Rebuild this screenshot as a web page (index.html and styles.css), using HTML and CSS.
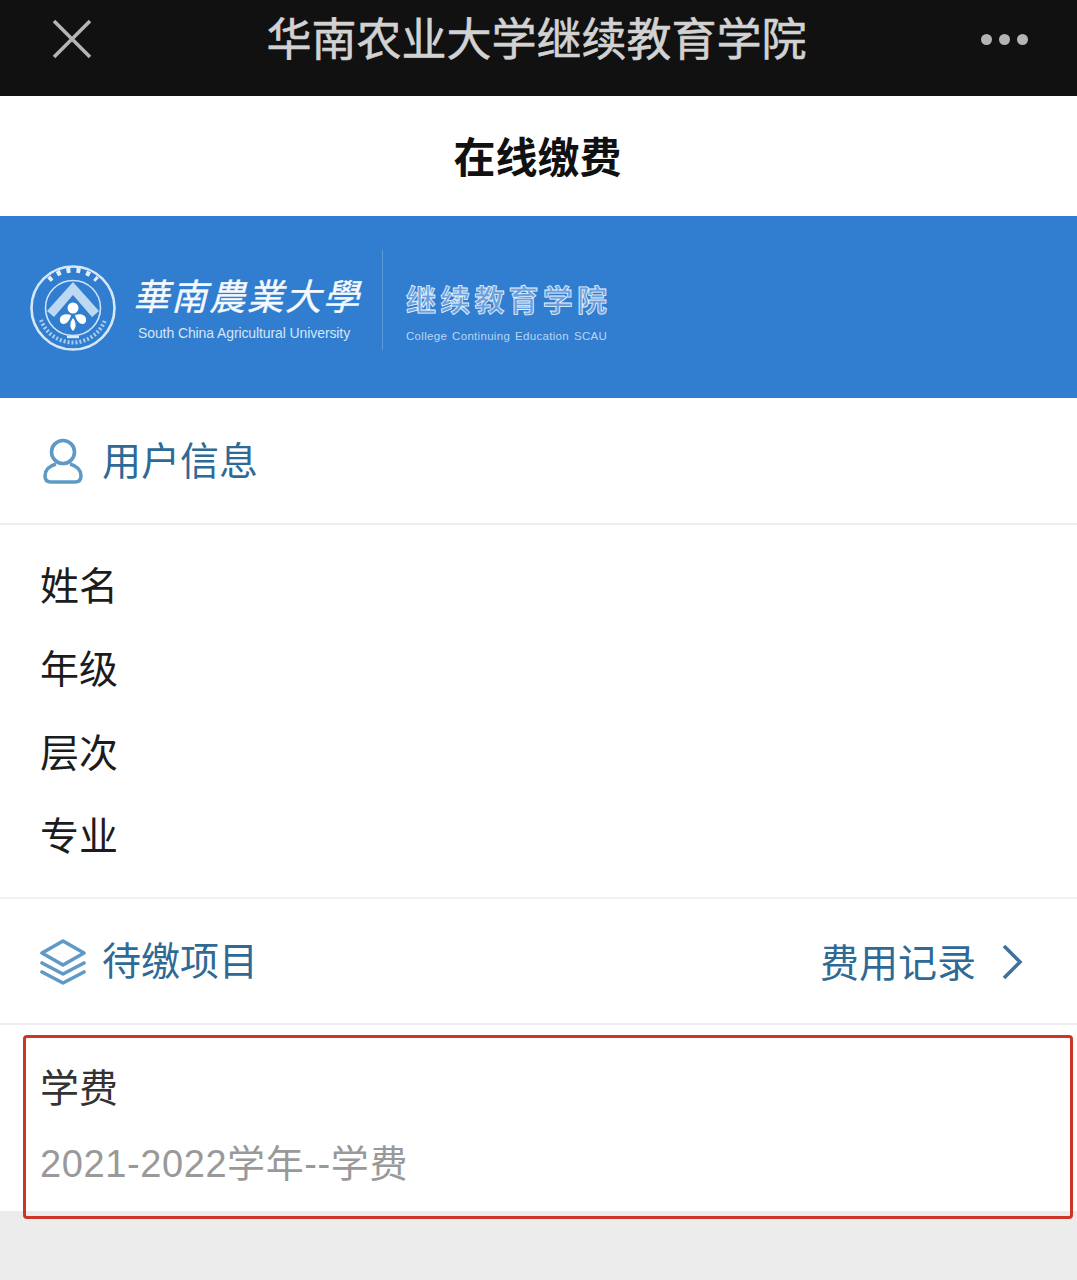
FILE: index.html
```html
<!DOCTYPE html>
<html lang="zh-CN">
<head>
<meta charset="utf-8">
<title>在线缴费</title>
<link rel="stylesheet" href="styles.css">
</head>
<body>
<div class="page">
  <header class="topbar">
    <svg class="close" viewBox="0 0 40 40" width="40" height="40"><path d="M2 2 38 38M38 2 2 38" fill="none" stroke="#b4b4b4" stroke-width="3.6"/></svg>
    <h1 class="toptitle">华南农业大学继续教育学院</h1>
    <div class="dots"><i></i><i></i><i></i></div>
  </header>
  <div class="pagetitle">在线缴费</div>
  <div class="banner">
    <svg class="seal" viewBox="0 0 88 88" width="88" height="88">
      <circle cx="44" cy="44" r="41.5" fill="none" stroke="#d6e8f8" stroke-width="2.6"/>
      <circle cx="44" cy="44" r="27.5" fill="none" stroke="#cfe3f6" stroke-width="1.6"/>
      <path d="M20 16a34 34 0 0 1 48 0" fill="none" stroke="#e4f0fa" stroke-width="5" stroke-dasharray="4 6"/>
      <path d="M12 56a34 34 0 0 0 64 0" fill="none" stroke="#a9cdef" stroke-width="4" stroke-dasharray="2 2"/>
      <path d="M44 18 18 47l7 6 19-22 19 22 7-6z" fill="#bcd8f2"/>
      <circle cx="44" cy="44" r="5.5" fill="#fff"/>
      <path d="M42 51c-7-2-12 1-11 6 1 5 9 4 11-6zM46 51c7-2 12 1 11 6-1 5-9 4-11-6zM44 54c-3 4-4 9 0 13 4-4 3-9 0-13z" fill="#fff"/>
      <path d="M38 73h12" stroke="#dcebf9" stroke-width="2.4"/>
    </svg>
    <div class="brand">
      <div class="brand-cn">華南農業大學</div>
      <div class="brand-en">South China Agricultural University</div>
    </div>
    <div class="brand-rule"></div>
    <div class="college">
      <div class="college-cn">继续教育学院</div>
      <div class="college-en">College Continuing Education SCAU</div>
    </div>
  </div>
  <section class="section-head">
    <div class="head-left">
      <svg class="head-icon" viewBox="0 0 46 46" width="46" height="46"><g fill="none" stroke="#5f9ac6" stroke-width="3.6"><circle cx="23" cy="14" r="11.5"/><path d="M16 26C9 28 5 32 5 38c0 4 2 6 6 6h24c4 0 6-2 6-6 0-6-4-10-11-12"/></g></svg>
      <span class="head-text head-text-up">用户信息</span>
    </div>
  </section>
  <section class="info">
    <div class="info-row">姓名</div>
    <div class="info-row">年级</div>
    <div class="info-row">层次</div>
    <div class="info-row">专业</div>
  </section>
  <section class="section-head section-head-2">
    <div class="head-left">
      <svg class="head-icon layers" viewBox="0 0 46 46" width="46" height="46"><g fill="none" stroke="#5f9ac6" stroke-width="3.6" stroke-linejoin="round" stroke-linecap="round"><path d="M23 2 44 14 23 26 2 14z"/><path d="M2 24 23 35 44 24"/><path d="M2 33 23 44 44 33"/></g></svg>
      <span class="head-text head-text-up">待缴项目</span>
    </div>
    <div class="head-right">
      <span class="head-text">费用记录</span>
      <svg class="chev" viewBox="0 0 22 36" width="22" height="36"><path d="M3 2 19 18 3 34" fill="none" stroke="#3f729c" stroke-width="3.6"/></svg>
    </div>
  </section>
  <section class="fee">
    <div class="fee-name">学费</div>
    <div class="fee-desc">2021-2022学年--学费</div>
    <div class="highlight"></div>
  </section>
</div>
</body>
</html>
```
FILE: styles.css
```css
* { box-sizing: border-box; }
html, body { margin: 0; padding: 0; }
body {
  width: 1077px;
  height: 1280px;
  overflow: hidden;
  background: #ececec;
  font-family: "Noto Sans CJK SC", "Liberation Sans", sans-serif;
}
.page { display: flex; flex-direction: column; width: 1077px; }
.topbar {
  height: 96px;
  background: #111112;
  display: flex;
  align-items: center;
  justify-content: space-between;
  padding: 0 49px 18px 52px;
}
.close { display: block; }
.toptitle {
  margin: 0 0 5px;
  flex: 1;
  text-align: center;
  font-size: 45px;
  line-height: 60px;
  font-weight: 400;
  color: #d2d2d2;
  -webkit-text-stroke: 0.6px #d2d2d2;
}
.dots { display: flex; gap: 7px; }
.dots i { display: block; width: 11px; height: 11px; border-radius: 50%; background: #b4b4b4; }
.pagetitle {
  height: 120px;
  background: #fff;
  display: flex;
  align-items: center;
  justify-content: center;
  padding: 0 2px 4px 0;
  font-size: 42px;
  font-weight: 700;
  color: #111;
}
.banner {
  height: 182px;
  background: #317dd0;
  display: flex;
  align-items: center;
  padding: 0 0 0 29px;
}
.seal { flex: none; margin-top: 2px; }
.brand { margin-left: 18px; width: 226px; }
.brand-cn {
  margin-left: -2px;
  font-size: 36px;
  line-height: 46px;
  letter-spacing: 2px;
  color: #f4f9fd;
  font-style: italic;
  -webkit-text-stroke: 0.4px #f4f9fd;
  white-space: nowrap;
}
.brand-en {
  margin-top: 6px;
  margin-left: 3px;
  font-family: "Liberation Sans", sans-serif;
  font-size: 14px;
  line-height: 20px;
  letter-spacing: -0.1px;
  color: #d5e6f7;
  white-space: nowrap;
}
.brand-rule { width: 1px; height: 100px; background: #5f9ada; margin: 0 0 14px 21px; }
.college { margin-left: 23px; padding-top: 7px; }
.college-cn {
  font-size: 30px;
  line-height: 42px;
  letter-spacing: 4.2px;
  font-weight: 700;
  color: rgba(255, 255, 255, 0.3);
  -webkit-text-stroke: 0.8px #eaf3fc;
  white-space: nowrap;
}
.college-en {
  margin-top: 8px;
  font-family: "Liberation Sans", sans-serif;
  font-size: 11.5px;
  line-height: 18px;
  letter-spacing: 0.3px;
  word-spacing: 1.5px;
  color: #b9d6f2;
  white-space: nowrap;
}
.section-head {
  height: 127px;
  background: #fff;
  border-bottom: 2px solid #eeeeee;
  display: flex;
  align-items: center;
  justify-content: space-between;
  padding: 0 54px 2px 40px;
}
.section-head-2 { height: 128px; border-top: 2px solid #f0f0f0; }
.head-left, .head-right { display: flex; align-items: center; }
.head-icon { flex: none; margin-top: 2px; }
.layers { margin-top: 3px; }
.head-left .head-text { margin-left: 16px; }
.head-text {
  font-size: 39px;
  line-height: 50px;
  color: #2f6a96;
  white-space: nowrap;
}
.head-text-up { margin-bottom: 4px; }
.chev { margin-left: 25px; margin-top: 4px; }
.info {
  height: 372px;
  background: #fff;
  display: flex;
  flex-direction: column;
  justify-content: center;
  padding: 0 0 6px 40px;
}
.info-row {
  height: 83.5px;
  flex: none;
  display: flex;
  align-items: center;
  font-size: 39px;
  color: #1c1c1c;
}
.fee {
  position: relative;
  height: 186px;
  background: #fff;
  padding: 30px 0 0 40px;
}
.fee-name { font-size: 39px; line-height: 60px; color: #333; }
.fee-desc {
  margin-top: 19px;
  font-family: "Liberation Sans", "Noto Sans CJK SC", sans-serif;
  font-size: 38px;
  line-height: 60px;
  letter-spacing: 0.6px;
  color: #999;
  white-space: nowrap;
}
.highlight {
  position: absolute;
  left: 23px;
  top: 10px;
  width: 1050px;
  height: 184px;
  border: 3px solid #cf3527;
  border-radius: 4px;
  pointer-events: none;
}
```
